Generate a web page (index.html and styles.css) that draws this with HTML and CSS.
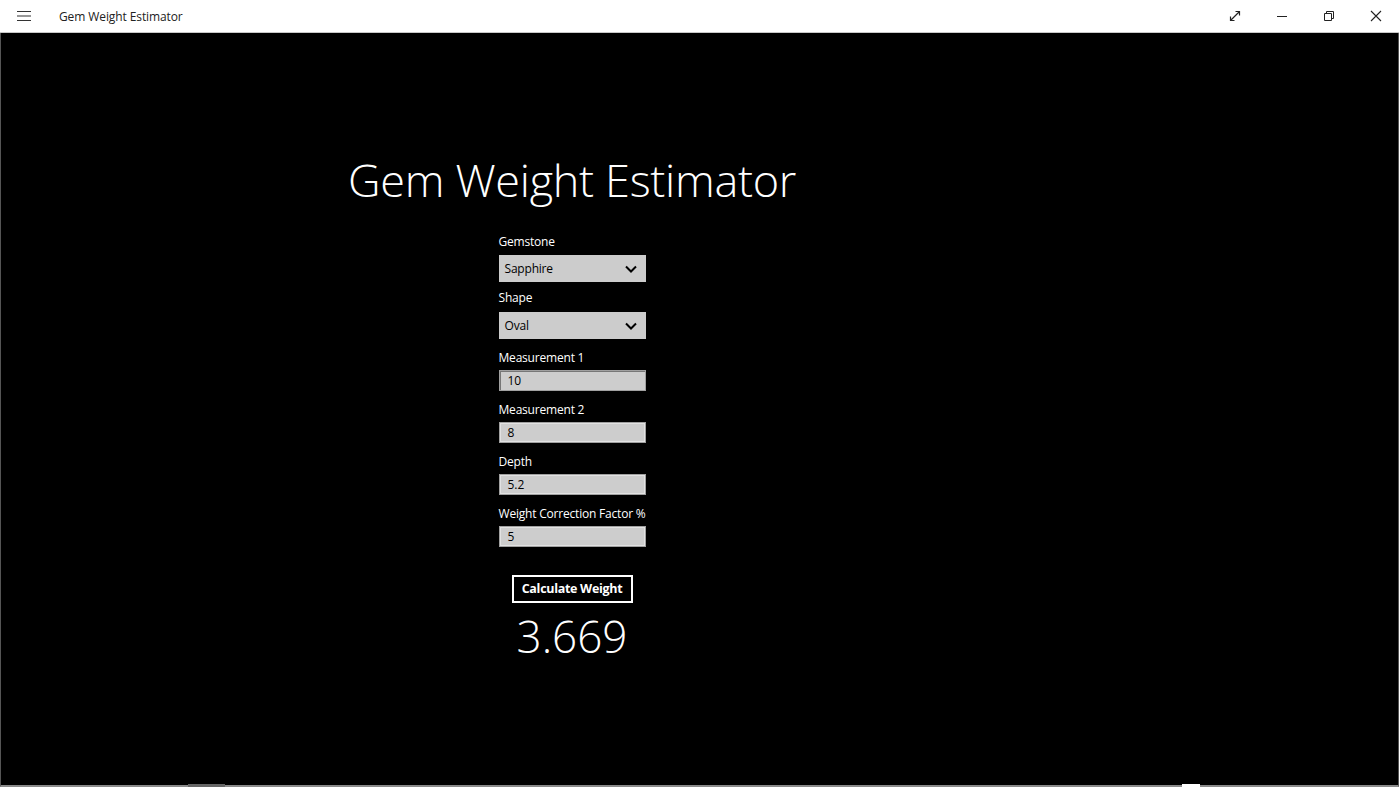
FILE: index.html
```html
<!DOCTYPE html>
<html>
<head>
<meta charset="utf-8">
<title>Gem Weight Estimator</title>
<link rel="stylesheet" href="styles.css">
</head>
<body>
<div class="titlebar">
  <div class="tb-left">
    <svg class="hamburger" width="14" height="12" viewBox="0 0 14 12"><path d="M0 1.5H14M0 6H14M0 10.5H14" stroke="#333" stroke-width="1.1"/></svg>
    <span class="app-title">Gem Weight Estimator</span>
  </div>
  <div class="tb-right">
    <div class="tb-btn"><svg width="12" height="12" viewBox="0 0 12 12"><path d="M1.5 10.5L10.5 1.5M6.5 1.5H10.5V5.5M1.5 6.5V10.5H5.5" fill="none" stroke="#222" stroke-width="1.2"/></svg></div>
    <div class="tb-btn"><svg width="12" height="12" viewBox="0 0 12 12"><path d="M1 6.5H11" stroke="#222" stroke-width="1"/></svg></div>
    <div class="tb-btn"><svg width="12" height="12" viewBox="0 0 12 12"><path d="M1.5 3.5H8.5V10.5H1.5Z M3.5 3.5V1.5H10.5V8.5H8.5" fill="none" stroke="#222" stroke-width="1"/></svg></div>
    <div class="tb-btn"><svg width="12" height="12" viewBox="0 0 12 12"><path d="M1 1L11 11M11 1L1 11" stroke="#222" stroke-width="1.1"/></svg></div>
  </div>
</div>
<div class="main">
  <div class="column">
    <h1 class="heading">Gem Weight Estimator</h1>
    <div class="form">
      <label class="lbl first-lbl">Gemstone</label>
      <div class="select"><span>Sapphire</span><svg width="12" height="8" viewBox="0 0 12 8"><path d="M1 1.5L6 6.5L11 1.5" fill="none" stroke="#000" stroke-width="2"/></svg></div>
      <label class="lbl gap">Shape</label>
      <div class="select"><span>Oval</span><svg width="12" height="8" viewBox="0 0 12 8"><path d="M1 1.5L6 6.5L11 1.5" fill="none" stroke="#000" stroke-width="2"/></svg></div>
      <label class="lbl gap2">Measurement 1</label>
      <div class="input focus">10</div>
      <label class="lbl gap2">Measurement 2</label>
      <div class="input">8</div>
      <label class="lbl gap2">Depth</label>
      <div class="input">5.2</div>
      <label class="lbl gap2">Weight Correction Factor %</label>
      <div class="input">5</div>
    </div>
    <div class="button">Calculate Weight</div>
    <div class="result">3.669</div>
  </div>
  <div class="scroll-marks">
    <span class="mark mark-left"></span>
    <span class="mark mark-right"></span>
  </div>
</div>
</body>
</html>
```

FILE: styles.css
```css
html, body {
  margin: 0;
  padding: 0;
  width: 1399px;
  height: 787px;
  overflow: hidden;
  background: #000;
  font-family: "Open Sans", "Noto Sans", sans-serif;
}
.titlebar {
  height: 32px;
  background: #fff;
  border-bottom: 1px solid #c8c8c8;
  display: flex;
  justify-content: space-between;
  align-items: center;
}
.tb-left {
  display: flex;
  align-items: center;
}
.hamburger {
  margin-left: 17px;
}
.app-title {
  margin-left: 28px;
  font-size: 12px;
  color: #222;
  letter-spacing: -0.1px;
}
.tb-right {
  display: flex;
  height: 32px;
}
.tb-btn {
  width: 47px;
  height: 32px;
  display: flex;
  align-items: center;
  justify-content: center;
}
.main {
  position: relative;
  height: 752px;
  background: #000;
  border-left: 1px solid #555;
  border-right: 1px solid #555;
  border-bottom: 2px solid #8a8a8a;
}
.column {
  width: 450px;
  margin-left: 346px;
  display: flex;
  flex-direction: column;
  align-items: center;
}
.heading {
  margin: 117px 0 0 0;
  font-weight: 300;
  font-size: 45px;
  line-height: 60px;
  color: #fff;
  letter-spacing: -0.3px;
  white-space: nowrap;
}
.form {
  width: 147px;
  margin-top: 23px;
  display: flex;
  flex-direction: column;
}
.lbl {
  font-size: 12px;
  line-height: 16px;
  color: #fff;
  white-space: nowrap;
  margin-bottom: 6px;
  letter-spacing: -0.2px;
}
.lbl.first-lbl { padding-top: 1px; margin-bottom: 5px; }
.lbl.gap { margin-top: 8px; }
.lbl.gap2 { margin-top: 11px; margin-bottom: 4px; }
.select {
  height: 27px;
  background: #cccccc;
  display: flex;
  align-items: center;
  justify-content: space-between;
  padding: 0 9px 0 6px;
  font-size: 12px;
  color: #000;
  letter-spacing: -0.2px;
}
.input {
  height: 19px;
  background: #cdcdcd;
  border: 1px solid #a0a0a0;
  box-shadow: inset 0 0 0 1px #e2e2e2;
  padding-left: 8px;
  font-size: 12px;
  line-height: 19px;
  color: #000;
}
.input.focus {
  box-shadow: inset 1px 1px 0 #777;
}
.button {
  margin-top: 28px;
  width: 117px;
  height: 24px;
  border: 2px solid #fff;
  color: #fff;
  font-weight: 700;
  font-size: 12.5px;
  line-height: 24px;
  text-align: center;
  letter-spacing: -0.3px;
}
.result {
  margin-top: 3px;
  font-weight: 300;
  font-size: 44px;
  line-height: 60px;
  color: #fff;
}
.scroll-marks {
  position: absolute;
  left: 0;
  right: 0;
  bottom: -2px;
  height: 3px;
}
.mark {
  position: absolute;
  bottom: 0;
  height: 3px;
}
.mark-left { left: 187px; width: 37px; background: #666; }
.mark-right { left: 1181px; width: 18px; background: #fff; }
```
